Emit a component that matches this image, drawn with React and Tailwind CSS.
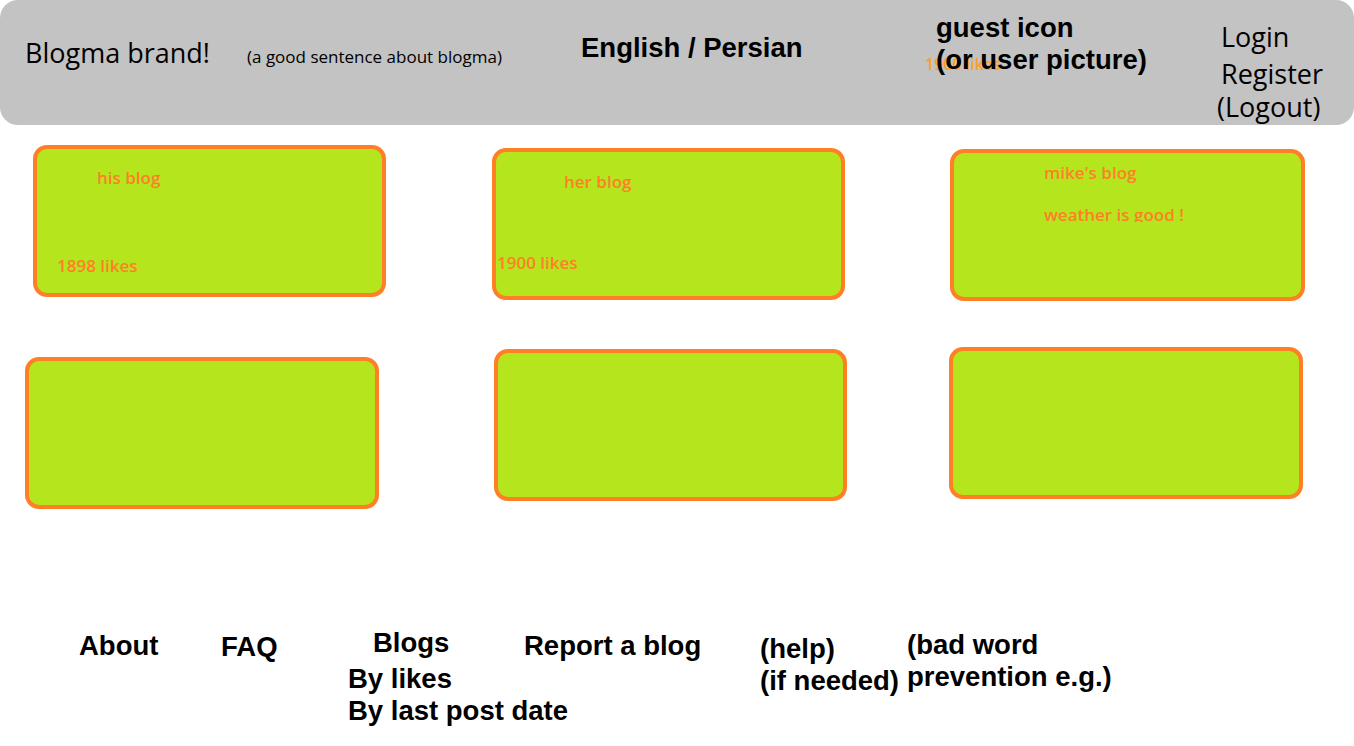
import React from "react";

const segoe = { fontFamily: '"Open Sans", "Noto Sans", sans-serif' };
const arial = { fontFamily: '"Liberation Sans", Arial, sans-serif' };

function Card({ className, children }) {
  return (
    <div
      className={`relative h-[152px] w-[353px] shrink-0 rounded-[14px] border-[4px] border-[#ff7f27] bg-[#b5e61d] ${className}`}
    >
      {children}
    </div>
  );
}

function CardText({ className, children }) {
  return (
    <div
      className={`whitespace-nowrap text-[17px] font-semibold leading-[22px] text-[#ff7f27] ${className}`}
      style={segoe}
    >
      {children}
    </div>
  );
}

export default function App() {
  return (
    <div className="w-[1354px] h-[746px] overflow-hidden bg-white">
      {/* header */}
      <header className="flex h-[125px] items-start rounded-[18px] bg-[#c3c3c3] text-black">
        <div className="ml-[25px] mt-[36px] w-[222px] whitespace-nowrap text-[27px] leading-[34px]" style={segoe}>
          Blogma brand!
        </div>
        <div className="mt-[46px] w-[334px] whitespace-nowrap text-[17px] leading-[22px]" style={segoe}>
          (a good sentence about blogma)
        </div>
        <div className="mt-[32px] w-[355px] whitespace-nowrap text-[27.5px] font-bold leading-[32px]" style={arial}>
          English / Persian
        </div>
        <div className="relative mt-[12px] w-[281px] whitespace-nowrap text-[27.5px] font-bold leading-[32px]" style={arial}>
          <div>guest icon</div>
          <div className="relative z-10">(or user picture)</div>
          <span
            className="absolute left-[-11px] top-[42px] text-[16px] font-semibold leading-[20px] text-[#ff9f27]"
            style={segoe}
          >
            1900 likes
          </span>
        </div>
        <div className="mt-[20px] flex flex-col whitespace-nowrap text-[27px] leading-[33px]" style={segoe}>
          <span className="ml-[4px]">Login</span>
          <span className="ml-[4px] mt-[4px]">Register</span>
          <span>(Logout)</span>
        </div>
      </header>

      {/* blog cards, row one */}
      <div className="flex h-[175px] items-start">
        <Card className="ml-[33px] mt-[20px]">
          <CardText className="ml-[60px] mt-[18px]">his blog</CardText>
          <CardText className="ml-[20px] mt-[66px]">1898 likes</CardText>
        </Card>
        <Card className="ml-[106px] mt-[23px]">
          <CardText className="ml-[68px] mt-[19px]">her blog</CardText>
          <CardText className="ml-[1px] mt-[59px]">1900 likes</CardText>
        </Card>
        <Card className="ml-[105px] mt-[24px] w-[355px]">
          <CardText className="ml-[90px] mt-[9px]">mike's blog</CardText>
          <CardText className="ml-[90px] mt-[20px] h-[18px] overflow-hidden">weather is good !</CardText>
        </Card>
      </div>

      {/* blog cards, row two */}
      <div className="flex h-[209px] items-start">
        <Card className="ml-[25px] mt-[57px] w-[354px]" />
        <Card className="ml-[115px] mt-[49px]" />
        <Card className="ml-[102px] mt-[47px] w-[354px]" />
      </div>

      {/* footer links */}
      <footer className="mt-[118px] flex items-start whitespace-nowrap text-[27.5px] font-bold leading-[32px] text-black" style={arial}>
        <div className="ml-[79px] mt-[3px] w-[142px]">About</div>
        <div className="mt-[4px] w-[127px]">FAQ</div>
        <div className="flex w-[176px] flex-col">
          <span className="ml-[25px]">Blogs</span>
          <span className="mt-[4px]">By likes</span>
          <span>By last post date</span>
        </div>
        <div className="mt-[3px] w-[236px]">Report a blog</div>
        <div className="mt-[6px] flex w-[147px] flex-col">
          <span>(help)</span>
          <span>(if needed)</span>
        </div>
        <div className="mt-[2px] flex flex-col">
          <span>(bad word</span>
          <span>prevention e.g.)</span>
        </div>
      </footer>
    </div>
  );
}
